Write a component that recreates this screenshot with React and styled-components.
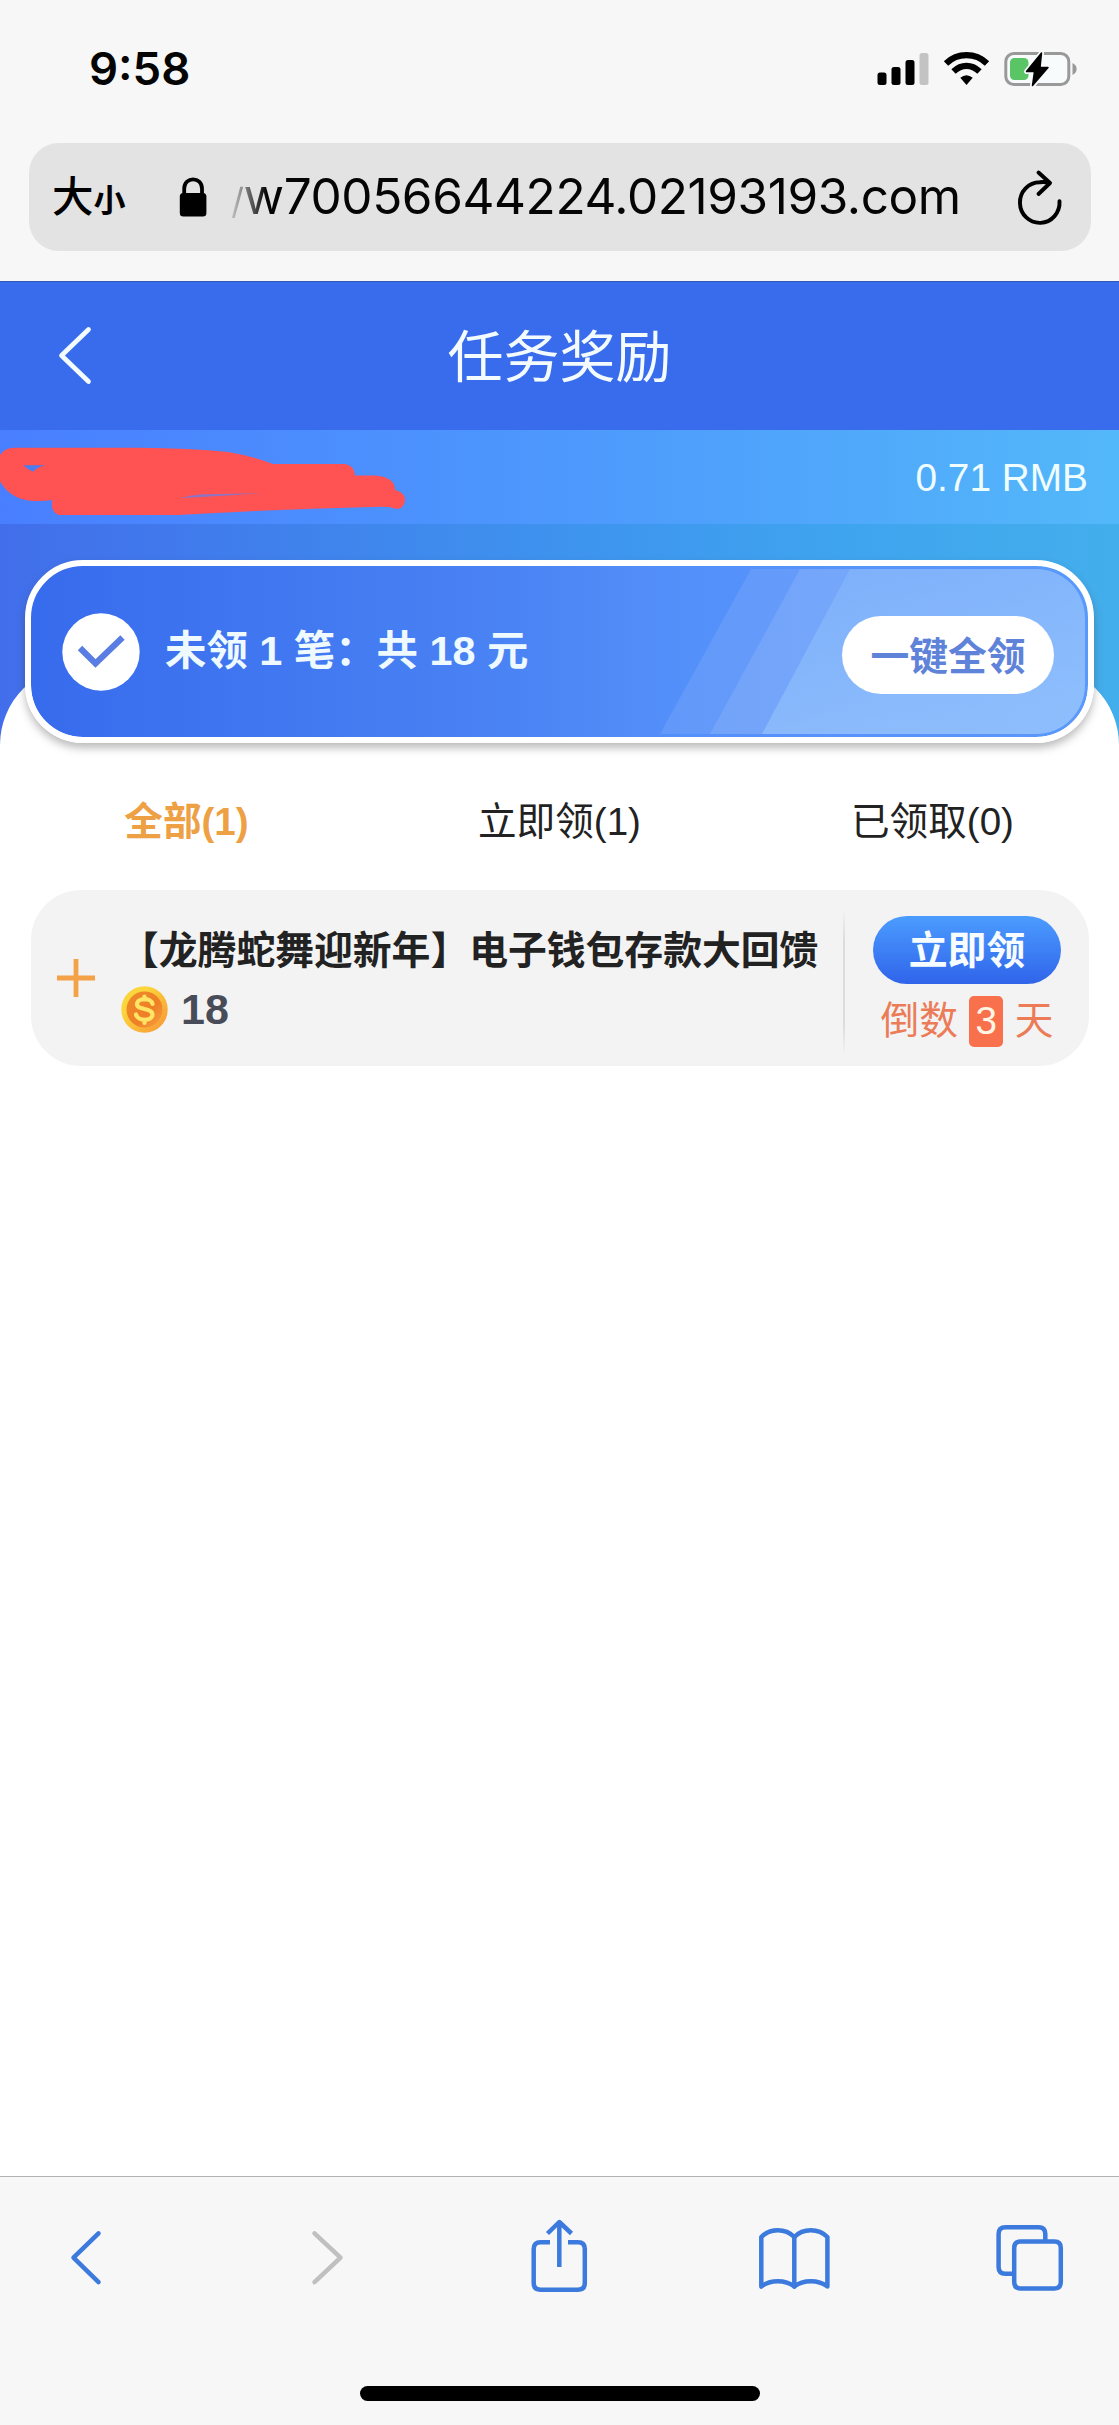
import React, { useState } from "react"
import styled, { createGlobalStyle } from "styled-components"

const GlobalStyle = createGlobalStyle`
  * {
    box-sizing: border-box;
  }
  body {
    margin: 0;
    background: #fff;
    font-family: "Liberation Sans", "Noto Sans CJK SC", sans-serif;
  }
  button {
    border: none;
    padding: 0;
    background: none;
    font-family: inherit;
  }
  svg {
    display: block;
    flex: none;
  }
`

const Phone = styled.div`
  display: flex;
  flex-direction: column;
  width: 1119px;
  height: 2425px;
  overflow: hidden;
`

const Label = styled.span`
  display: block;
  line-height: 1;
  white-space: nowrap;
`

/* browser top */
const BrowserTop = styled.div`
  flex: none;
  height: 281px;
  background: #f7f7f7;
`

const StatusBar = styled.div`
  display: flex;
  align-items: center;
  height: 143px;
  padding: 0 41px 5px 89px;
`

const Time = styled(Label)`
  flex: 1;
  font-family: Inter, sans-serif;
  font-size: 45.5px;
  font-weight: 600;
  color: #050505;
`

const AddressBar = styled.div`
  display: flex;
  align-items: center;
  height: 108px;
  margin: 0 28px 0 29px;
  padding: 0 27px 0 23px;
  border-radius: 30px;
  background: #e3e3e3;
`

const TextSize = styled(Label)`
  display: flex;
  align-items: baseline;
  width: 127px;
  padding-bottom: 4px;
  font-family: "Noto Sans CJK SC", sans-serif;
  font-size: 41.5px;
  font-weight: 500;
  small {
    font-size: 32px;
    font-weight: 600;
  }
`

const Url = styled(Label)`
  flex: 1;
  margin-left: 24px;
  font-family: Inter, sans-serif;
  font-size: 49.5px;
  letter-spacing: -0.4px;
  background: linear-gradient(90deg, #c4c4c4 0, #8a8a8a 12px, #050505 36px);
  -webkit-background-clip: text;
  background-clip: text;
  -webkit-text-fill-color: transparent;
  small {
    font-size: 36px;
  }
`

/* page */
const NavBar = styled.div`
  display: grid;
  grid-template-columns: 150px 1fr 150px;
  align-items: center;
  flex: none;
  height: 149px;
  border-top: 1px solid #3458b4;
  background: #396ced;
`

const NavTitle = styled(Label)`
  padding-bottom: 7px;
  text-align: center;
  font-family: "Noto Sans CJK SC", sans-serif;
  font-size: 56px;
  font-weight: 400;
  color: #f4fbff;
`

const BalanceBar = styled.div`
  display: flex;
  justify-content: space-between;
  align-items: center;
  flex: none;
  height: 94px;
  padding-right: 31px;
  background: linear-gradient(90deg, #497fff, #4d98fd 50%, #53b8f9);
`

const Balance = styled(Label)`
  padding-top: 3px;
  font-size: 38.8px;
  color: #f0fdff;
`

const Hero = styled.div`
  flex: none;
  height: 221px;
  padding: 36px 25px 0;
  background: linear-gradient(90deg, #426eeb, #3e93ee 50%, #3fa4ef 75%, #43aeec);
`

const Summary = styled.div`
  position: relative;
  z-index: 1;
  display: flex;
  align-items: center;
  height: 183px;
  padding: 0 34px 0 31px;
  border: 6px solid #fff;
  border-radius: 58px;
  background: linear-gradient(90deg, #376bed, #4a83f4 45%, #5490fa 62%, #5a98fb) padding-box;
  box-shadow: 0 5px 9px rgba(60, 60, 60, 0.35);
`

const Stripes = styled.svg`
  position: absolute;
  right: 3px;
  top: 3px;
  border-radius: 0 49px 49px 0;
`

const SummaryText = styled(Label)`
  flex: 1;
  margin-left: 25px;
  font-size: 41.4px;
  font-weight: 600;
  color: #eefaff;
`

const ClaimAll = styled.button`
  position: relative;
  display: flex;
  align-items: center;
  justify-content: center;
  width: 212px;
  height: 78px;
  margin-top: 7px;
  padding-top: 4px;
  border-radius: 39px;
  background: #fff;
  color: #6083da;
  font-size: 38.8px;
  font-weight: 600;
`

const Sheet = styled.div`
  flex: 1;
  margin-top: -80px;
  padding: 117px 30px 0 31px;
  border-radius: 80px 80px 0 0;
  background: #fff;
`

const Tabs = styled.div`
  display: grid;
  grid-template-columns: repeat(3, 1fr);
  align-items: center;
  height: 80px;
  margin: 0 -30px 28px -31px;
`

const Tab = styled.button`
  font-size: 38.6px;
  font-weight: ${(props) => (props.$active ? 600 : 400)};
  color: ${(props) => (props.$active ? "#eda044" : "#222")};
`

const Reward = styled.div`
  display: flex;
  height: 176px;
  border-radius: 50px;
  background: #f3f3f3;
`

const RewardPlus = styled.div`
  display: flex;
  align-items: center;
  width: 89px;
  padding-left: 26px;
`

const RewardBody = styled.div`
  flex: 1;
  padding-top: 38px;
`

const RewardTitle = styled(Label)`
  font-family: "Noto Sans CJK SC", sans-serif;
  font-size: 38.8px;
  font-weight: 600;
  color: #222;
`

const Amount = styled.div`
  display: flex;
  align-items: center;
  gap: 13px;
  margin: 19px 0 0 1px;
  font-size: 43px;
  font-weight: 700;
  color: #484b58;
`

const RewardSide = styled.div`
  display: flex;
  flex-direction: column;
  align-items: center;
  width: 244px;
  padding-top: 26px;
`

const Divider = styled.div`
  width: 2px;
  margin: 22px 0 14px;
  background: linear-gradient(#f0f0f0, #dcdcdc 20%, #dcdcdc 80%, #f0f0f0);
`

const Claim = styled.button`
  display: flex;
  align-items: center;
  justify-content: center;
  width: 188px;
  height: 68px;
  padding-top: 3px;
  border-radius: 34px;
  background: linear-gradient(#4b9cff, #3064ea);
  color: #f6fcff;
  font-size: 38.8px;
  font-weight: 600;
`

const Countdown = styled.div`
  display: flex;
  align-items: center;
  gap: 11.5px;
  margin-top: 12px;
  font-size: 38.7px;
  color: #ec7b57;
`

const Days = styled.span`
  display: flex;
  align-items: center;
  justify-content: center;
  width: 34px;
  height: 51px;
  border-radius: 5px;
  background: #f8714c;
  color: #fff6e6;
`

/* browser bottom */
const BrowserBottom = styled.div`
  display: flex;
  flex-direction: column;
  align-items: center;
  flex: none;
  height: 249px;
  border-top: 1px solid #b2b2b2;
  background: #f7f7f7;
`

const Tools = styled.div`
  display: flex;
  justify-content: space-between;
  width: 100%;
  padding: 39px 49px 0 46px;
`

const HomeBar = styled.div`
  width: 400px;
  height: 15px;
  margin-top: 80px;
  border-radius: 8px;
  background: #000;
`

function StatusIcons() {
  return (
    <svg width="202" height="40" viewBox="0 0 202 40">
      <rect x="1.5" y="23.5" width="9" height="12.5" rx="2.5" />
      <rect x="15.5" y="18" width="9" height="18" rx="2.5" />
      <rect x="29.5" y="11" width="9" height="25" rx="2.5" />
      <rect x="43.5" y="4" width="9" height="32" rx="2.5" fill="#c3c3c3" />
      <g fill="none" stroke="#000" strokeWidth="6.3">
        <path d="M70 14.5C81.500 3.400 99.500 3.400 111 14.500" />
        <path d="M77.500 22.500C85.500 15 95.500 15 103.500 22.500" />
      </g>
      <path d="M84.300 28.800Q90.500 23.500 96.700 28.800L90.500 36Z" />
      <rect x="129.800" y="4.500" width="63" height="31" rx="8" fill="#f8fbfc" stroke="#999" strokeWidth="3" />
      <path d="M196.500 14C202 16.500 202 23.500 196.500 26Z" fill="#999" />
      <rect x="134" y="9" width="18.500" height="22" rx="4.500" fill="#59c565" />
      <path
        d="M165.500 4L150.500 22.500H158.500L156.500 36.500L172 18.500H164Z"
        stroke="#f8fbfc"
        strokeWidth="5"
        strokeLinejoin="round"
      />
      <path
        d="M165.500 4L150.500 22.500H158.500L156.500 36.500L172 18.500H164Z"
        stroke="#000"
        strokeWidth="1.500"
        strokeLinejoin="round"
      />
    </svg>
  )
}

function LockIcon() {
  return (
    <svg width="28" height="40" viewBox="0 0 28 40">
      <rect x="0.800" y="16" width="26.600" height="23.500" rx="3.500" />
      <path d="M5.200 18V11.500C5.200 -0.800 23 -0.800 23 11.500V18" fill="none" stroke="#000" strokeWidth="3.800" />
    </svg>
  )
}

function ReloadIcon() {
  return (
    <svg width="48" height="60" viewBox="0 0 48 60" fill="none" stroke="#000" strokeWidth="3.900" strokeLinecap="round" strokeLinejoin="round">
      <path d="M43.500 34.200A19.800 20.300 0 1 1 23.700 15.300Q29 14.500 33.500 16" />
      <path d="M22.500 5.500L34 16L22.500 27" />
    </svg>
  )
}

function BackIcon() {
  return (
    <svg width="150" height="64" viewBox="0 0 150 64" fill="none" stroke="#f4fbff" strokeWidth="4.700" strokeLinecap="round" strokeLinejoin="round">
      <path d="M88.500 5.500L61.500 31.500L88.500 57.500" />
    </svg>
  )
}

// marker over the account name
function Marker() {
  return (
    <svg width="410" height="94" viewBox="0 0 410 94" fill="#ff5252">
      <path d="M0 25Q5 17.700 14 17.700H139Q190 18 228 22Q252 26 273 34H345Q354 35.500 355 45.500H375Q395 47 395 60Q405 62.500 405 70Q404 78.500 397 79Q390 76.500 382 76.700Q270 79.500 178 85H59Q50 82 52.500 70Q45 71 34 71Q11 70 0 51.500Z" />
      <path d="M23 35.300H46Q38 36.500 33 41.700Q27 39 23 35.300Z" fill="#4a7df0" />
      <path d="M180 68.300Q190 65 200 64.600L261 63.200Q230 65.500 180 68.300Z" fill="#8b74c4" />
    </svg>
  )
}

function CheckIcon() {
  return (
    <svg width="78" height="78" viewBox="0 0 78 78">
      <circle cx="39" cy="39" r="38.700" fill="#fff" />
      <path d="M18 35L33.500 50.500L60.500 24.500" fill="none" stroke="#597de2" strokeWidth="6.200" />
    </svg>
  )
}

function PlusIcon() {
  return (
    <svg width="38" height="38" viewBox="0 0 38 38" stroke="#f3a248" strokeWidth="4.800">
      <path d="M19 0V38M0 19H38" />
    </svg>
  )
}

function CoinIcon() {
  return (
    <svg width="47" height="47" viewBox="0 0 47 47">
      <defs>
        <linearGradient id="rim" x1="0" y1="0" x2="1" y2="1">
          <stop offset="0.3" stopColor="#fbd53c" />
          <stop offset="1" stopColor="#f79335" />
        </linearGradient>
        <linearGradient id="face" x1="0" y1="0" x2="1" y2="1">
          <stop offset="0" stopColor="#ee8a28" />
          <stop offset="0.600" stopColor="#ee7f26" />
          <stop offset="1" stopColor="#fba444" />
        </linearGradient>
      </defs>
      <circle cx="23.500" cy="23.500" r="23.200" fill="url(#rim)" />
      <circle cx="23.500" cy="23.500" r="18" fill="url(#face)" />
      <path
        d="M31.500 18C30.500 11.500 16 11.500 16 18.200C16 24.500 31.500 21.500 31.500 28.500C31.500 35.500 16.500 35.500 15 28.500M23.500 10.500V13.500M23.500 33.500V37"
        fill="none"
        stroke="#ffe566"
        strokeWidth="4.200"
        strokeLinecap="round"
      />
    </svg>
  )
}

const toolIcons = [
  { name: "back", paths: ["M52.500 17.300L27.500 41.700L52.500 66.200"] },
  { name: "forward", color: "#c0c0c0", paths: ["M32.500 17.300L58.500 41.700L32.500 66.200"] },
  {
    name: "share",
    cap: "butt",
    paths: [
      "M32 26.300H22.500Q15.700 26.300 15.700 33V67Q15.700 73.700 22.500 73.700H60Q66.800 73.700 66.800 67V33Q66.800 26.300 60 26.300H50",
      "M41.300 6V51M29.500 17.500L41.300 6L53.500 17.500",
    ],
  },
  {
    name: "bookmarks",
    paths: [
      "M7.300 70.500V21C16 12 31.500 12 40.300 21C49 12 64.500 12 73.400 21V70.500C64.500 63.500 49 63.500 40.300 70.500C31.500 63.500 16 63.500 7.300 70.500Z",
      "M40.300 21V70.500",
    ],
  },
  {
    name: "windows",
    cap: "butt",
    paths: [
      "M30.500 25.600H64.500Q70.800 25.600 70.800 32V66Q70.800 72.400 64.500 72.400H30.500Q24.200 72.400 24.200 66V32Q24.200 25.600 30.500 25.600Z",
      "M55.300 25V18Q55.300 11.300 48.500 11.300H15.500Q8.600 11.300 8.600 18V51Q8.600 57.800 15.500 57.800H23",
    ],
  },
]

const tabList = [
  { id: "all", text: "全部(1)" },
  { id: "now", text: "立即领(1)" },
  { id: "done", text: "已领取(0)" },
]

function App() {
  const [tab, setTab] = useState("all")

  return (
    <Phone>
      <GlobalStyle />

      <BrowserTop>
        <StatusBar>
          <Time>9:58</Time>
          <StatusIcons />
        </StatusBar>
        <AddressBar>
          <TextSize>
            大<small>小</small>
          </TextSize>
          <LockIcon />
          <Url>
            <small>/</small>w70056644224.02193193.com
          </Url>
          <ReloadIcon />
        </AddressBar>
      </BrowserTop>

      <NavBar>
        <BackIcon />
        <NavTitle>任务奖励</NavTitle>
      </NavBar>

      <BalanceBar>
        <Marker />
        <Balance>0.71 RMB</Balance>
      </BalanceBar>

      <Hero>
        <Summary>
          <Stripes width="437" height="165" viewBox="0 0 437 165">
            <defs>
              <linearGradient id="shine" x1="0" y1="0" x2="0.300" y2="1">
                <stop offset="0" stopColor="#a8dcff" stopOpacity="0.180" />
                <stop offset="1" stopColor="#b4e0ff" stopOpacity="0.360" />
              </linearGradient>
            </defs>
            <path d="M12 165L103 0H437V165Z" fill="#fff" fillOpacity="0.09" />
            <path d="M62 165L152 0H437V165Z" fill="#fff" fillOpacity="0.1" />
            <path d="M114 165L202 0H437V165Z" fill="url(#shine)" />
          </Stripes>
          <CheckIcon />
          <SummaryText>未领 1 笔：共 18 元</SummaryText>
          <ClaimAll>
            <Label>一键全领</Label>
          </ClaimAll>
        </Summary>
      </Hero>

      <Sheet>
        <Tabs>
          {tabList.map((item) => (
            <Tab key={item.id} $active={tab === item.id} onClick={() => setTab(item.id)}>
              <Label>{item.text}</Label>
            </Tab>
          ))}
        </Tabs>

        <Reward>
          <RewardPlus>
            <PlusIcon />
          </RewardPlus>
          <RewardBody>
            <RewardTitle>【龙腾蛇舞迎新年】电子钱包存款大回馈</RewardTitle>
            <Amount>
              <CoinIcon />
              <Label>18</Label>
            </Amount>
          </RewardBody>
          <Divider />
          <RewardSide>
            <Claim>
              <Label>立即领</Label>
            </Claim>
            <Countdown>
              <Label>倒数</Label>
              <Days>
                <Label>3</Label>
              </Days>
              <Label>天</Label>
            </Countdown>
          </RewardSide>
        </Reward>
      </Sheet>

      <BrowserBottom>
        <Tools>
          {toolIcons.map((icon) => (
            <svg
              key={icon.name}
              width="80"
              height="90"
              viewBox="0 0 80 90"
              fill="none"
              stroke={icon.color || "#3c7bdd"}
              strokeWidth="4.500"
              strokeLinecap={icon.cap || "round"}
              strokeLinejoin="round"
            >
              {icon.paths.map((d) => (
                <path key={d} d={d} />
              ))}
            </svg>
          ))}
        </Tools>
        <HomeBar />
      </BrowserBottom>
    </Phone>
  )
}

export default App
